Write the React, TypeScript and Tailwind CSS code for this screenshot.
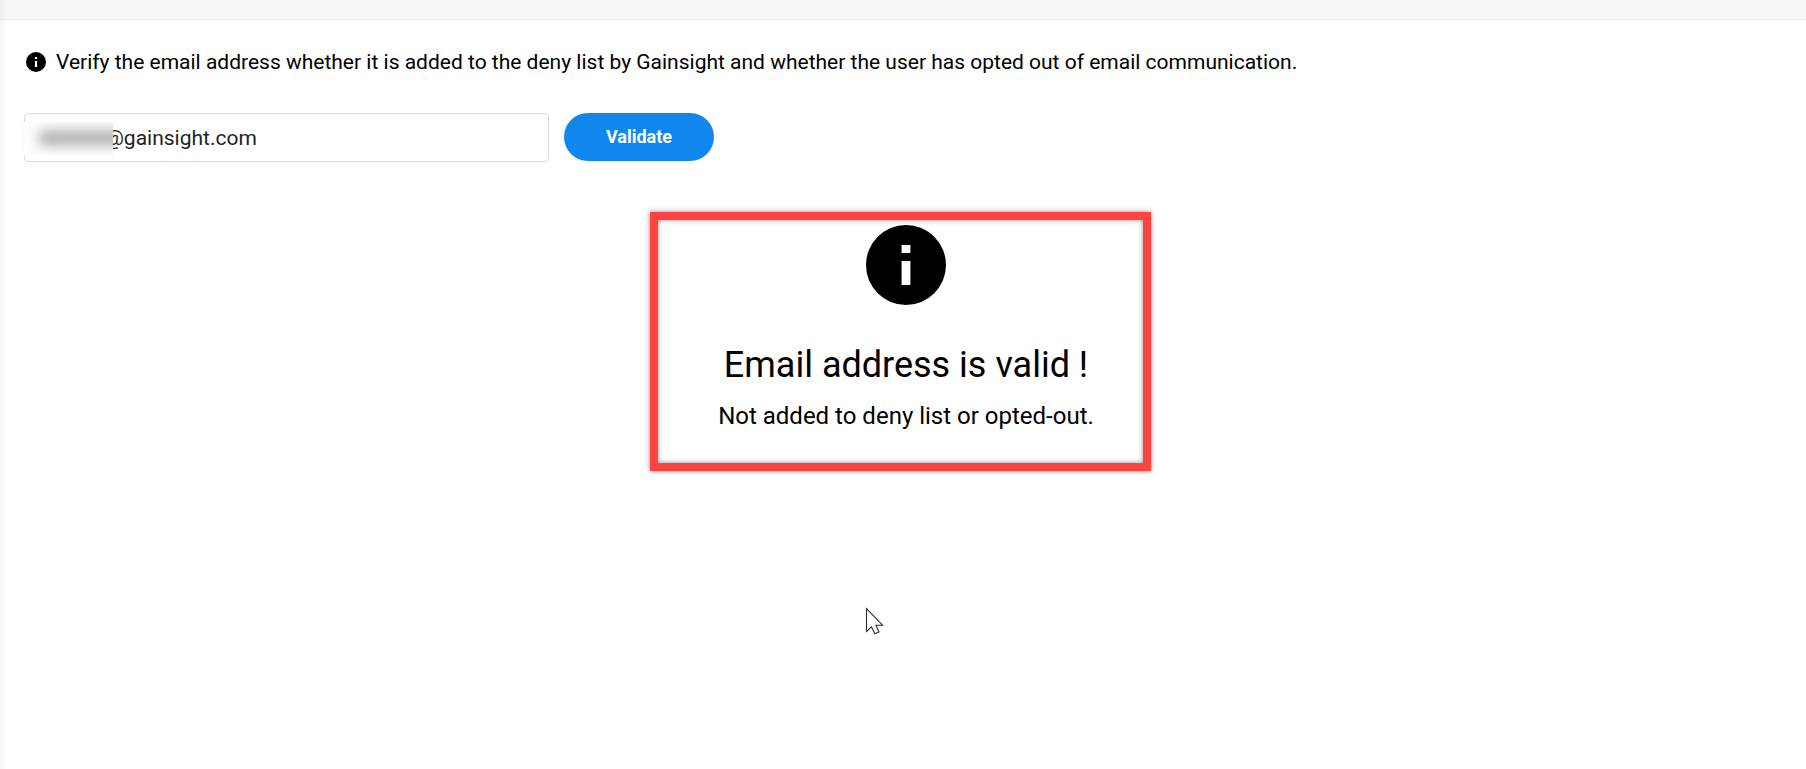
import { useState } from "react"

function InfoIcon({ className }: { className: string }) {
  return (
    <svg viewBox="0 0 20 20" className={className} aria-hidden="true">
      <circle cx="10" cy="10" r="10" fill="#000" />
      <path d="M8.9 5h2.2v2H8.9zM8.9 9h2.2v6H8.9z" fill="#fff" />
    </svg>
  )
}

function Pointer() {
  return (
    <svg
      viewBox="0 0 20 28"
      className="pointer-events-none absolute left-[865px] top-[607px] h-7 w-5"
      aria-hidden="true"
    >
      <path
        d="M1.5 1.5v23l5-4.7 3.3 7 4.2-1.8-3-6.8h6.6z"
        fill="#fff"
        stroke="#2b2735"
        strokeWidth="1.1"
      />
    </svg>
  )
}

export default function App() {
  const [domain, setDomain] = useState("@gainsight.com")

  return (
    <div className="relative min-h-screen bg-white font-[Roboto,'Liberation_Sans',sans-serif] text-black">
      <header className="h-5 border-b border-[#e9edf1] bg-[#f6f8fb]" />
      <div className="absolute inset-y-0 left-0 w-2 bg-linear-to-r from-black/4 to-transparent" />

      <main className="px-6">
        <p className="flex items-center gap-[10px] pt-7 pl-[2px] text-[21px] leading-7">
          <InfoIcon className="h-5 w-5 shrink-0" />
          <span>
            Verify the email address whether it is added to the deny list by
            Gainsight and whether the user has opted out of email communication.
          </span>
        </p>

        <form
          className="mt-[37px] flex items-start gap-[15px]"
          onSubmit={(e) => e.preventDefault()}
        >
          <div className="relative w-[525px]">
            <input
              type="text"
              aria-label="Email address"
              className="h-[49px] w-full rounded border border-[#d3dce6] bg-white pr-4 pl-20 text-[21px] text-[#1f1f1f] outline-none"
              value={domain}
              onChange={(e) => setDomain(e.target.value)}
            />
            {/* masked part of the address */}
            <div className="pointer-events-none absolute top-[9px] -left-[2px] h-[33px] w-[91px] overflow-hidden bg-[#fcfdfe]">
              <div className="mt-2 ml-4 h-4 w-24 rounded-full bg-[#b4b4b4] blur-[6px]" />
            </div>
          </div>
          <button
            type="submit"
            className="h-12 w-[150px] rounded-full bg-[#1187ee] text-lg font-bold text-white"
          >
            Validate
          </button>
        </form>

        <section className="mt-[63px] flex justify-center pl-[6px]">
          <div className="relative flex flex-col items-center">
            <InfoIcon className="h-20 w-20" />
            <h1 className="mt-9 text-4xl leading-12">Email address is valid !</h1>
            <p className="mt-[5px] text-2xl leading-11">
              Not added to deny list or opted-out.
            </p>
            <div className="pointer-events-none absolute -top-[13px] left-1/2 -ml-64 h-[259px] w-[501px] border-8 border-[#ff4343] shadow-[0_0_5px_rgba(0,0,0,0.45),inset_0_0_5px_rgba(0,0,0,0.45)]" />
          </div>
        </section>
      </main>

      <Pointer />
    </div>
  )
}
